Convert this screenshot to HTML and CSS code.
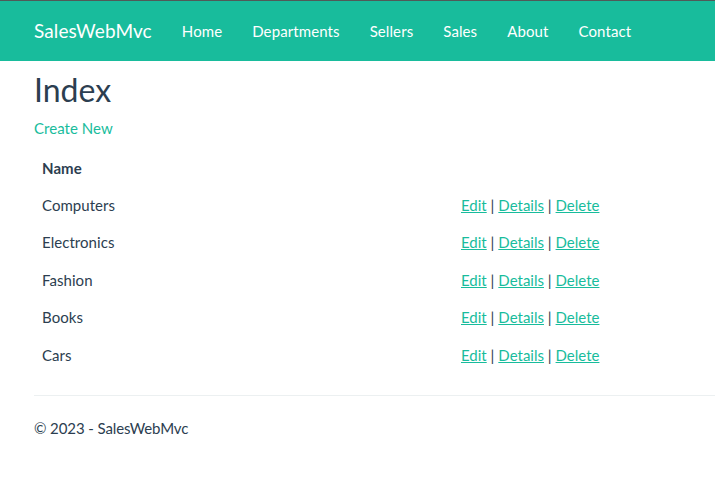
FILE: index.html
```html
<!DOCTYPE html>
<html lang="en">
<head>
<meta charset="utf-8">
<title>Index - SalesWebMvc</title>
<link rel="stylesheet" href="styles.css">
</head>
<body>
<nav class="navbar">
  <a class="brand" href="#">SalesWebMvc</a>
  <ul class="nav">
    <li><a href="#">Home</a></li>
    <li><a href="#">Departments</a></li>
    <li><a href="#">Sellers</a></li>
    <li><a href="#">Sales</a></li>
    <li><a href="#">About</a></li>
    <li><a href="#">Contact</a></li>
  </ul>
</nav>
<main class="content">
  <h2 class="title">Index</h2>
  <p class="create"><a href="#">Create New</a></p>
  <table class="table">
    <thead>
      <tr><th class="col-name">Name</th><th></th></tr>
    </thead>
    <tbody>
      <tr><td>Computers</td><td><a class="act" href="#">Edit</a> | <a class="act" href="#">Details</a> | <a class="act" href="#">Delete</a></td></tr>
      <tr><td>Electronics</td><td><a class="act" href="#">Edit</a> | <a class="act" href="#">Details</a> | <a class="act" href="#">Delete</a></td></tr>
      <tr><td>Fashion</td><td><a class="act" href="#">Edit</a> | <a class="act" href="#">Details</a> | <a class="act" href="#">Delete</a></td></tr>
      <tr><td>Books</td><td><a class="act" href="#">Edit</a> | <a class="act" href="#">Details</a> | <a class="act" href="#">Delete</a></td></tr>
      <tr><td>Cars</td><td><a class="act" href="#">Edit</a> | <a class="act" href="#">Details</a> | <a class="act" href="#">Delete</a></td></tr>
    </tbody>
  </table>
  <hr class="rule">
  <footer class="footer">
    <p>&copy; 2023 - SalesWebMvc</p>
  </footer>
</main>
</body>
</html>
```
FILE: styles.css
```css
* { box-sizing: border-box; }
html, body {
  margin: 0;
  padding: 0;
  background: #ffffff;
}
body {
  font-family: Lato, "Liberation Sans", sans-serif;
  font-size: 15px;
  line-height: 1.42857;
  letter-spacing: 0.05px;
  color: #2c3e50;
  overflow: hidden;
}
a { color: #18bc9c; text-decoration: none; }

.navbar {
  display: flex;
  align-items: center;
  height: 61px;
  background: #18bc9c;
  border-top: 1px solid #505a58;
  padding-left: 19px;
}
.brand {
  display: block;
  color: #ffffff;
  font-size: 19px;
  line-height: 20px;
  padding: 20px 15px;
  letter-spacing: 0.12px;
}
.nav {
  display: flex;
  list-style: none;
  margin: 0;
  padding: 0;
}
.nav a {
  display: block;
  color: #ffffff;
  line-height: 20px;
  padding: 20px 15px;
  letter-spacing: 0.1px;
}

.content {
  padding-left: 34px;
}
.title {
  font-size: 32px;
  font-weight: 400;
  line-height: 1.1;
  letter-spacing: 0;
  margin: 11px 0 11px;
}
.create {
  margin: 0 0 10px;
}
.table {
  width: 100%;
  border-collapse: collapse;
  border-spacing: 0;
  margin-bottom: 21px;
}
.table th, .table td {
  padding: 8px;
  text-align: left;
  vertical-align: top;
  line-height: 1.42857;
}
.table th { font-weight: 700; }
.col-name { width: 419px; }
.act { text-decoration: underline; letter-spacing: 0; }

.rule {
  border: 0;
  border-top: 1px solid #ecf0f1;
  margin: 21px 0 22px;
}
.footer p { margin: 0; letter-spacing: -0.1px; }
```
